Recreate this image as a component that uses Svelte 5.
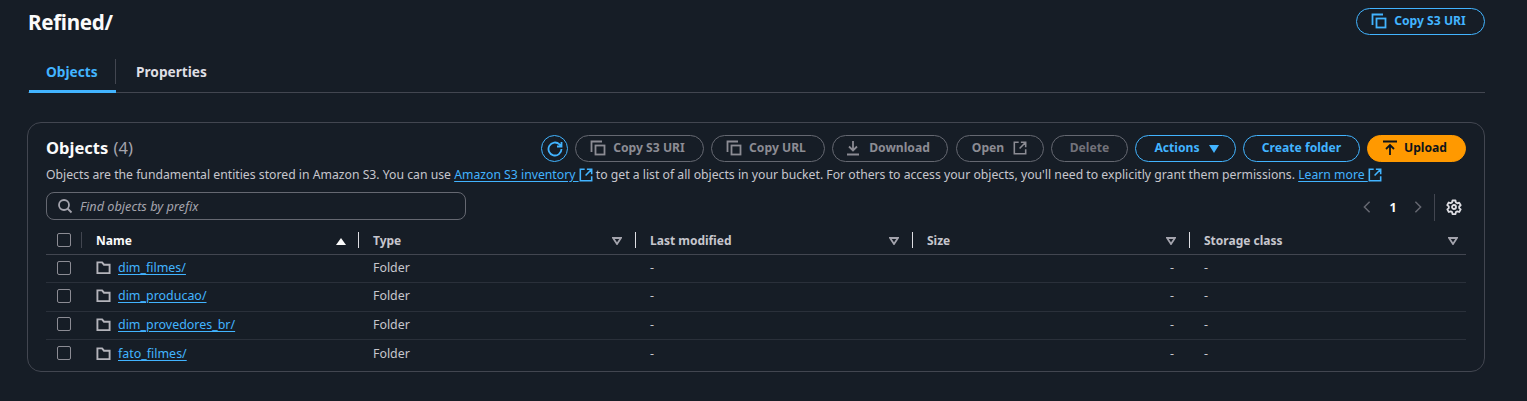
<script>
  const columns = [
    { label: 'Type', key: 'type' },
    { label: 'Last modified', key: 'modified' },
    { label: 'Size', key: 'size' },
    { label: 'Storage class', key: 'storage' }
  ];

  const rows = ['dim_filmes/', 'dim_producao/', 'dim_provedores_br/', 'fato_filmes/'];
</script>

{#snippet copyIcon()}
  <svg class="icon" viewBox="0 0 16 16"><path d="M1.5 12V1.5H12" /><rect x="5.5" y="5.5" width="9" height="9" /></svg>
{/snippet}

{#snippet externalIcon()}
  <svg class="icon ext" viewBox="0 0 16 16"><path d="M14.5 9.5v5h-13v-13h5M9 1.5h5.5V7M14.5 1.5 7.5 8.5" /></svg>
{/snippet}

{#snippet filterIcon()}
  <svg class="filter" viewBox="0 0 10 8"><path d="M1 1h8L5 7z" /></svg>
{/snippet}

<div class="page">
  <header class="head">
    <h1>Refined/</h1>
    <button class="btn normal uri">{@render copyIcon()}Copy S3 URI</button>
  </header>

  <nav class="tabs">
    <div class="tab active"><span>Objects</span></div>
    <div class="tab"><span>Properties</span></div>
  </nav>

  <section class="card">
    <div class="title-row">
      <h2>Objects <span class="count">(4)</span></h2>
      <div class="actions">
        <button class="refresh" aria-label="Refresh">
          <svg class="icon" viewBox="0 0 16 16"><path d="M14.5 8a6.5 6.5 0 1 1-2-4.7L14.5 5.2M14.5 1v4.5H10" /></svg>
        </button>
        <button class="btn disabled w-uri">{@render copyIcon()}Copy S3 URI</button>
        <button class="btn disabled w-url">{@render copyIcon()}Copy URL</button>
        <button class="btn disabled w-dl">
          <svg class="icon" viewBox="0 0 16 16"><path d="M8 1v9M4 6.5 8 10.5l4-4M2 14.5h12" /></svg>Download
        </button>
        <button class="btn disabled w-open">Open{@render externalIcon()}</button>
        <button class="btn disabled dim w-del">Delete</button>
        <button class="btn normal w-act">Actions<svg class="caret" viewBox="0 0 12 8"><path d="M1 0h10L6 8z" /></svg></button>
        <button class="btn normal w-new">Create folder</button>
        <button class="btn primary w-up">
          <svg class="icon" viewBox="0 0 16 16"><path d="M1 1.5h14M8 15V5.5M4 9l4-4 4 4" /></svg>Upload
        </button>
      </div>
    </div>

    <p class="desc">Objects are the fundamental entities stored in Amazon S3. You can use <a href="#s3">Amazon S3 inventory {@render externalIcon()}</a> to get a list of all objects in your bucket. For others to access your objects, you'll need to explicitly grant them permissions. <a href="#more">Learn more {@render externalIcon()}</a></p>

    <div class="tools">
      <div class="search">
        <svg class="icon" viewBox="0 0 16 16"><circle cx="7" cy="7" r="5" /><path d="m10.5 10.5 4 4" /></svg>
        <span>Find objects by prefix</span>
      </div>
      <div class="pager">
        <svg class="chev" viewBox="0 0 16 16"><path d="M11 2 5 8l6 6" /></svg>
        <b>1</b>
        <svg class="chev" viewBox="0 0 16 16"><path d="m5 2 6 6-6 6" /></svg>
        <i class="sep"></i>
        <svg class="gear" viewBox="0 0 16 16"><path d="M6.5 1.5h3l.4 2 1.4.8 1.9-.7 1.5 2.6-1.5 1.3v1.6l1.5 1.3-1.5 2.6-1.9-.7-1.4.8-.4 2h-3l-.4-2-1.4-.8-1.9.7-1.5-2.6 1.5-1.3V7.4L1.2 6.1l1.5-2.6 1.9.7 1.4-.8z" /><circle cx="8" cy="8" r="2" /></svg>
      </div>
    </div>

    <div class="table">
      <div class="tr th">
        <div class="cell check"><i class="box"></i></div>
        <div class="cell name-head">
          <i class="rule"></i><span class="lead">Name</span>
          <svg class="filter" viewBox="0 0 10 8"><path class="solid" d="M0 8h10L5 1z" /></svg>
        </div>
        {#each columns as col (col.key)}
          <div class="cell head-cell">
            <i class="rule"></i><span>{col.label}</span>
            {@render filterIcon()}
          </div>
        {/each}
      </div>
      {#each rows as name (name)}
        <div class="tr">
          <div class="cell check"><i class="box"></i></div>
          <div class="cell name">
            <svg class="icon folder" viewBox="0 0 16 16"><path d="M1.5 14V2.5h5l2 2.5h6v9z" /></svg>
            <a href="#{name}">{name}</a>
          </div>
          <div class="cell">Folder</div>
          <div class="cell">-</div>
          <div class="cell right">-</div>
          <div class="cell">-</div>
        </div>
      {/each}
    </div>
  </section>
</div>

<style>
  :global(body) {
    margin: 0;
    background: #161d26;
  }

  .page {
    box-sizing: border-box;
    width: 1527px;
    height: 401px;
    padding: 8px 42px 0 28px;
    font-family: 'Noto Sans', sans-serif;
    font-size: 12.4px;
    color: #c6c6cd;
    overflow: hidden;
  }

  .head {
    display: flex;
    align-items: flex-start;
    justify-content: space-between;
    height: 42px;
  }

  h1 {
    margin: 0;
    font-size: 20.6px;
    letter-spacing: -0.3px;
    line-height: 28px;
    font-weight: 700;
    color: #fbfbfb;
  }

  .tabs {
    display: flex;
    height: 42px;
    border-bottom: 1px solid #424650;
  }

  .tab {
    display: flex;
    align-items: center;
    height: 25px;
    margin-top: 9px;
    padding-left: 20px;
    font-weight: 700;
    font-size: 13.7px;
    color: #dedee3;
  }

  .tab.active {
    width: 70px;
    margin-left: 1px;
    padding: 0 0 6px 17px;
    color: #42b4ff;
    height: 25px;
    border-bottom: 3px solid #42b4ff;
    position: relative;
  }

  .tab.active::after {
    content: '';
    position: absolute;
    right: 0;
    top: 0;
    height: 25px;
    width: 1px;
    background: #424650;
  }

  .card {
    box-sizing: border-box;
    margin: 29px 0 0 -1px;
    height: 250px;
    padding: 12px 18px 0 18px;
    border: 1px solid #424650;
    border-radius: 14px;
  }

  .title-row {
    display: flex;
    align-items: center;
    justify-content: space-between;
    height: 27px;
  }

  h2 {
    margin: -3px 0 0;
    font-size: 16.5px;
    font-weight: 700;
    color: #fbfbfb;
  }

  .count {
    font-weight: 400;
    color: #a4a4ad;
    margin-left: 1px;
  }

  .actions {
    display: flex;
    gap: 7px;
  }

  .btn {
    box-sizing: border-box;
    display: flex;
    align-items: center;
    justify-content: center;
    gap: 7px;
    height: 27px;
    padding: 0 0 2px;
    border: 1px solid #42b4ff;
    border-radius: 14px;
    background: none;
    font: 700 12.15px 'Noto Sans', sans-serif;
  }

  .btn .icon {
    margin-top: 1px;
  }

  .normal {
    color: #42b4ff;
  }

  .disabled {
    border-color: #656871;
    color: #8c8c94;
  }

  .dim {
    color: #72727a;
  }

  .primary {
    background: #ff9900;
    border-color: #ff9900;
    color: #0f141a;
  }

  .uri {
    width: 129px;
    gap: 7px;
    padding-right: 4px;
  }

  .w-uri { width: 129px; gap: 7px; padding-right: 4px; }
  .w-url { width: 114px; gap: 7px; padding-right: 4px; }
  .w-dl { width: 116px; margin-right: 1px; gap: 8px; padding-right: 5px; }
  .w-open { width: 88px; gap: 9px; padding-right: 1px; }
  .w-del { width: 77px; }
  .w-act { width: 101px; gap: 9px; padding-left: 3px; }
  .w-new { width: 117px; }
  .w-up { width: 99px; gap: 6px; padding-right: 4px; }

  .refresh {
    box-sizing: border-box;
    display: flex;
    align-items: center;
    justify-content: center;
    width: 27px;
    height: 27px;
    padding: 0;
    border: 1px solid #42b4ff;
    border-radius: 50%;
    background: none;
    color: #42b4ff;
  }

  .icon {
    flex: none;
    width: 16px;
    height: 16px;
    fill: none;
    stroke: currentColor;
    stroke-width: 1.8;
  }

  .ext {
    width: 14px;
    height: 14px;
  }

  .desc .ext {
    vertical-align: -2.5px;
    color: #42b4ff;
  }

  .caret {
    width: 12px;
    height: 8px;
    fill: currentColor;
    margin-top: 2px;
    margin-left: -1px;
  }

  .desc {
    margin: 0;
    padding-top: 1px;
    height: 23px;
    line-height: 24px;
    font-size: 12.22px;
    white-space: nowrap;
    color: #c6c6cd;
  }

  a {
    color: #42b4ff;
    text-decoration: underline;
    text-underline-offset: 2px;
  }

  .tools {
    display: flex;
    justify-content: space-between;
    height: 36px;
    margin-top: 6px;
  }

  .search {
    box-sizing: border-box;
    display: flex;
    align-items: center;
    gap: 7px;
    width: 420px;
    height: 28px;
    padding-left: 10px;
    border: 1px solid #656871;
    border-radius: 8px;
    font-size: 12.7px;
    font-style: italic;
    color: #a4a4ad;
  }

  .pager {
    display: flex;
    align-items: center;
    height: 30px;
    color: #656871;
  }

  .chev {
    width: 14px;
    height: 14px;
    fill: none;
    stroke: #656871;
    stroke-width: 1.7;
  }

  .pager b {
    width: 37px;
    padding-left: 1px;
    box-sizing: border-box;
    text-align: center;
    color: #fbfbfb;
  }

  .sep {
    width: 1px;
    height: 27px;
    margin: 0 11px 0 9px;
    background: #424650;
  }

  .gear {
    width: 16px;
    height: 16px;
    margin-right: 4px;
    fill: none;
    stroke: #dedee3;
    stroke-width: 1.8;
    stroke-linejoin: round;
  }

  .table {
    width: 1420px;
  }

  .tr {
    display: grid;
    grid-template-columns: 35px repeat(5, 277px);
    height: 28.3px;
    border-bottom: 1px solid #2a303a;
    box-sizing: border-box;
  }

  .tr:last-child {
    border-bottom: none;
  }

  .th {
    height: 27px;
    border-bottom: 1px solid #424650;
    font-size: 12px;
    font-weight: 700;
    color: #c6c6cd;
  }

  .cell {
    display: flex;
    align-items: center;
    padding: 0 0 2px 15px;
  }

  .check {
    padding-left: 11px;
  }

  .box {
    box-sizing: border-box;
    width: 14px;
    height: 14px;
    border: 1.5px solid #8c8c94;
    border-radius: 2px;
  }

  .th .cell {
    position: relative;
  }

  .rule {
    position: absolute;
    left: 0;
    top: 4px;
    height: 16px;
    width: 1px;
    background: #dedee3;
  }

  .name-head .rule {
    background: #424650;
  }

  .lead {
    color: #fbfbfb;
  }

  .filter {
    position: absolute;
    right: 13px;
    top: 9px;
    width: 10px;
    height: 8px;
    fill: none;
    stroke: #a4a4ad;
    stroke-width: 1.8;
  }

  .head-cell:last-child .filter {
    right: 8px;
  }

  .filter .solid {
    fill: #fbfbfb;
    stroke: none;
  }

  .name-head .filter {
    right: 12px;
  }

  .name {
    gap: 7px;
    font-size: 12.45px;
  }

  .folder {
    width: 15px;
    height: 15px;
    color: #b4b4bb;
    stroke-width: 2;
  }

  .right {
    justify-content: flex-end;
    padding-right: 15px;
  }
</style>
